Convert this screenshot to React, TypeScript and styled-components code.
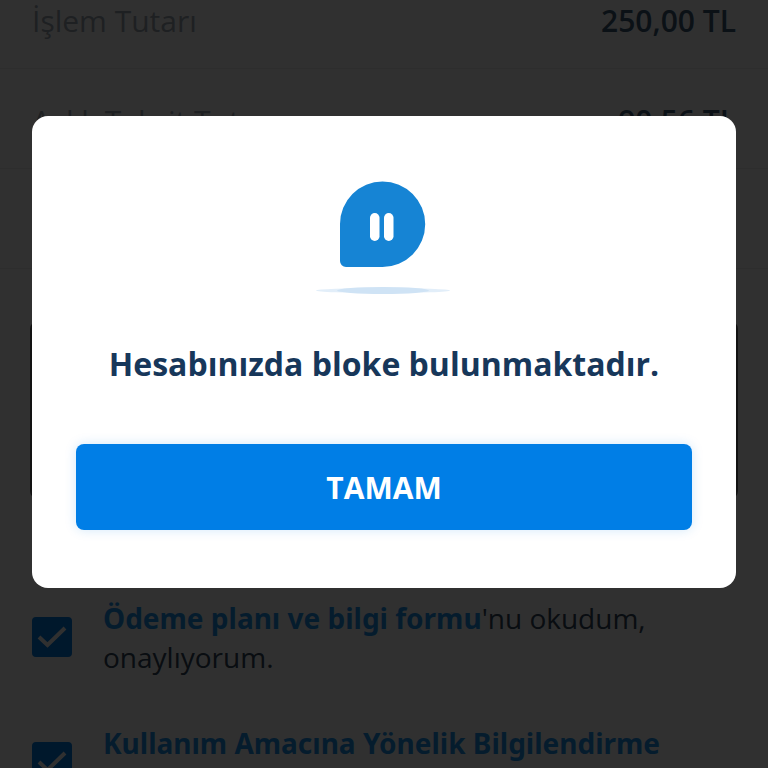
import React, { useState } from "react";
import styled, { createGlobalStyle } from "styled-components";

const GlobalStyle = createGlobalStyle`
  * {
    box-sizing: border-box;
  }
  body {
    margin: 0;
    background: #ffffff;
    font-family: "Open Sans", "Noto Sans", sans-serif;
    overflow: hidden;
  }
`;

const Page = styled.main`
  height: 100vh;
  overflow: hidden;
  font-size: 28px;
  line-height: 39px;
`;

const Summary = styled.dl`
  margin: 0;
  font-size: 30px;
`;

const SummaryRow = styled.div<{ $first?: boolean }>`
  display: flex;
  justify-content: space-between;
  min-height: ${(p) => (p.$first ? "0" : "100px")};
  padding: ${(p) => (p.$first ? "1px" : "32px")} 32px 28px;
  border-bottom: 1px solid #f0f0f0;
`;

const SummaryLabel = styled.dt`
  color: #a0aab6;
`;

const SummaryValue = styled.dd`
  margin: 0;
  color: #3c5a78;
  font-weight: 600;
`;

const PlanBox = styled.section`
  height: 178px;
  margin: 52px 30px 100px;
  border: 2px solid #606060;
  border-radius: 8px;
`;

const Agreements = styled.div`
  display: flex;
  flex-direction: column;
  gap: 47px;
  padding: 0 32px;
`;

const Agreement = styled.div`
  display: flex;
  align-items: center;
  gap: 31px;
  min-height: 78px;
`;

const TickHolder = styled.span`
  display: grid;
  flex: none;
  width: 40px;
  height: 40px;
  margin-bottom: 2px;

  > * {
    grid-area: 1 / 1;
  }
`;

const Tick = styled.input`
  appearance: none;
  width: 40px;
  height: 40px;
  margin: 0;
  border: 2px solid #007ee6;
  border-radius: 4px;
  cursor: pointer;

  &:checked {
    background: #007ee6;
  }
`;

const TickMark = styled.svg`
  width: 40px;
  height: 40px;
  pointer-events: none;
`;

const AgreementText = styled.label`
  flex: 1;
  align-self: flex-start;
  max-width: 600px;
  color: #32465a;
`;

const AgreementLink = styled.a`
  color: #1e96f0;
  font-family: "Noto Sans", "Open Sans", sans-serif;
  font-weight: 700;
  text-decoration: none;
`;

const Overlay = styled.div`
  position: fixed;
  inset: 0;
  display: flex;
  align-items: flex-start;
  justify-content: center;
  padding: 116px 32px 32px;
  background: rgba(0, 0, 0, 0.81);
`;

const Dialog = styled.section`
  display: flex;
  flex-direction: column;
  align-items: center;
  width: 100%;
  padding: 64px 44px 58px;
  border-radius: 16px;
  background: #ffffff;
`;

const Illustration = styled.svg`
  width: 136px;
  height: 116px;
`;

const Title = styled.h1`
  margin: 46px 0 58px;
  color: #17375a;
  font-size: 32px;
  font-weight: 700;
  line-height: 44px;
  text-align: center;
`;

const ConfirmButton = styled.button`
  width: 100%;
  height: 86px;
  border: 0;
  border-radius: 8px;
  background: #007ee6;
  box-shadow: 0 0 12px rgba(0, 126, 230, 0.18);
  color: #ffffff;
  font-family: inherit;
  font-size: 30px;
  font-weight: 700;
  line-height: 39px;
  cursor: pointer;
`;

interface AgreementItemProps {
  id: string;
  link: string;
  rest?: string;
}

function AgreementItem({ id, link, rest }: AgreementItemProps) {
  return (
    <Agreement>
      <TickHolder>
        <Tick type="checkbox" id={id} defaultChecked />
        <TickMark viewBox="0 0 40 40" aria-hidden="true">
          <path d="M7 20 15.500 28 33 11" fill="none" stroke="#ffffff" strokeWidth="4" />
        </TickMark>
      </TickHolder>
      <AgreementText htmlFor={id}>
        <AgreementLink href="#">{link}</AgreementLink>
        {rest}
      </AgreementText>
    </Agreement>
  );
}

export default function App() {
  const [open, setOpen] = useState(true);

  return (
    <>
      <GlobalStyle />
      <Page>
        <Summary>
          <SummaryRow $first>
            <SummaryLabel>İşlem Tutarı</SummaryLabel>
            <SummaryValue>250,00 TL</SummaryValue>
          </SummaryRow>
          <SummaryRow>
            <SummaryLabel>Aylık Taksit Tutarı</SummaryLabel>
            <SummaryValue>90,56 TL</SummaryValue>
          </SummaryRow>
          <SummaryRow />
        </Summary>
        <PlanBox />
        <Agreements>
          <AgreementItem id="plan" link="Ödeme planı ve bilgi formu" rest="'nu okudum, onaylıyorum." />
          <AgreementItem id="usage" link="Kullanım Amacına Yönelik Bilgilendirme" />
        </Agreements>
      </Page>
      {open && (
        <Overlay>
          <Dialog role="alertdialog" aria-modal="true" aria-labelledby="dialog-title">
            <Illustration viewBox="0 0 136 116" aria-hidden="true">
              <path
                d="M66.500 1.500A42.700 42.700 0 0 1 66.500 86.900H30a6 6 0 0 1-6-6V44A42.500 42.500 0 0 1 66.500 1.500Z"
                fill="#1684d4"
              />
              <rect x="54" y="33" width="9.500" height="28" rx="4.750" fill="#ffffff" />
              <rect x="68" y="33" width="9.500" height="28" rx="4.750" fill="#ffffff" />
              <ellipse cx="67" cy="110.500" rx="67" ry="2.500" fill="#e2eef9" />
              <ellipse cx="67" cy="110.500" rx="46" ry="3.500" fill="#cfe3f5" />
            </Illustration>
            <Title id="dialog-title">Hesabınızda bloke bulunmaktadır.</Title>
            <ConfirmButton type="button" onClick={() => setOpen(false)}>
              TAMAM
            </ConfirmButton>
          </Dialog>
        </Overlay>
      )}
    </>
  );
}
